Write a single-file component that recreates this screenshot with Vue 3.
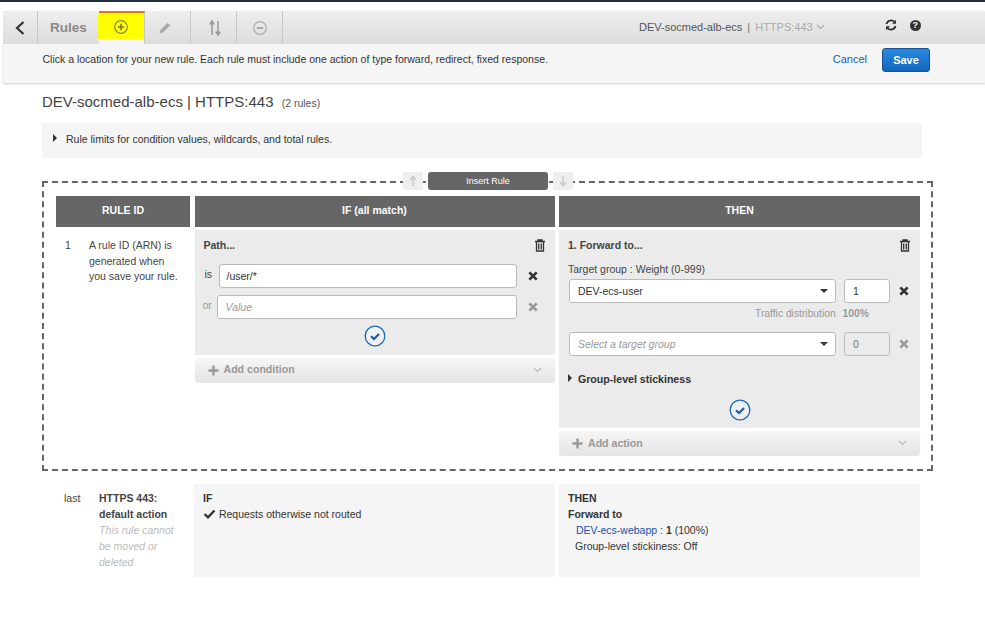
<template>
  <div class="page">
    <div class="topline"></div>

    <div class="toolbar">
      <div class="tab back">
        <svg width="12" height="16" viewBox="0 0 12 16"><path d="M9.500 2 3 8l6.500 6" fill="none" stroke="#333" stroke-width="2.200" /></svg>
      </div>
      <div class="tab rules">Rules</div>
      <div class="tab active">
        <div class="marker">
          <svg width="16" height="16" viewBox="0 0 16 16"><circle cx="8" cy="8" r="6.300" fill="none" stroke="#8a8a4a" stroke-width="1.200" /><path d="M8 4.800v6.400M4.800 8h6.400" stroke="#77773a" stroke-width="1.600" /></svg>
        </div>
      </div>
      <div class="tab icon-edit">
        <svg width="14" height="14" viewBox="0 0 14 14"><path d="M1.500 12.500 2.400 9 9.600 1.800l2.600 2.600L5 11.600z" fill="#aaa" /></svg>
      </div>
      <div class="tab">
        <svg width="12" height="18" viewBox="0 0 12 18"><path d="M3 16V3M.8 5.500 3 2l2.200 3.500M9 2v13M6.800 12.500 9 16l2.200-3.500" fill="none" stroke="#999" stroke-width="1.500" /></svg>
      </div>
      <div class="tab icon-remove">
        <svg width="16" height="16" viewBox="0 0 16 16"><circle cx="8" cy="8" r="6.300" fill="none" stroke="#aaa" stroke-width="1.200" /><path d="M4.800 8h6.400" stroke="#999" stroke-width="1.600" /></svg>
      </div>
      <div class="tab filler">
        <span class="lb-name">DEV-socmed-alb-ecs</span>
        <span class="lb-sep">|</span>
        <span class="lb-port">HTTPS:443</span>
        <svg class="lb-caret" width="9" height="6" viewBox="0 0 9 6"><path d="M1 1l3.500 3.500L8 1" fill="none" stroke="#aaa" stroke-width="1.200" /></svg>
        <svg class="refresh" width="12" height="12" viewBox="0 0 12 12"><path d="M1.500 5A4.600 4.600 0 0 1 9.500 3M10.500 7A4.600 4.600 0 0 1 2.500 9" fill="none" stroke="#333" stroke-width="1.800" /><path d="M11 .8v4H7zM1 11.200v-4h4z" fill="#333" /></svg>
        <span class="help">?</span>
      </div>
    </div>

    <div class="infobar">
      <span>Click a location for your new rule. Each rule must include one action of type forward, redirect, fixed response.</span>
      <a class="cancel">Cancel</a>
      <button class="save">Save</button>
    </div>

    <div class="content">
      <h1 class="title">DEV-socmed-alb-ecs | HTTPS:443 <small>(2 rules)</small></h1>
      <div class="limits"><i class="tri"></i>Rule limits for condition values, wildcards, and total rules.</div>

      <div class="editbox">
        <div class="insert">
          <span class="arrow-btn"><svg width="8" height="12" viewBox="0 0 8 12"><path d="M4 11V2M1 5l3-3.500L7 5" fill="none" stroke="#ccc" stroke-width="1.600" /></svg></span>
          <span class="insert-btn">Insert Rule</span>
          <span class="arrow-btn"><svg width="8" height="12" viewBox="0 0 8 12"><path d="M4 1v9M1 7l3 3.500L7 7" fill="none" stroke="#ccc" stroke-width="1.600" /></svg></span>
        </div>

        <div class="grid">
          <div class="head">RULE ID</div>
          <div class="head">IF (all match)</div>
          <div class="head">THEN</div>

          <div class="id-col">
            <span class="num">1</span>
            <span class="id-text">A rule ID (ARN) is generated when you save your rule.</span>
          </div>

          <div>
            <div class="panel if-panel">
              <div class="panel-title">
                <span>Path...</span>
                <svg width="12" height="13" viewBox="0 0 12 13"><path d="M1 2.500h10M4 2.500V1h4v1.500M2.500 3v9h7V3M4.700 4.500v6M7.300 4.500v6" fill="none" stroke="#333" stroke-width="1.300" /></svg>
              </div>
              <div class="cond-row">
                <span class="cond-label">is</span>
                <div class="field cond-is">/user/*</div>
                <svg class="x" width="10" height="10" viewBox="0 0 9 9"><path d="M1.200 1.200l6.600 6.600M7.800 1.200 1.200 7.800" stroke="#333" stroke-width="2.400" /></svg>
              </div>
              <div class="cond-row second">
                <span class="cond-label muted">or</span>
                <div class="field cond-or placeholder">Value</div>
                <svg class="x" width="10" height="10" viewBox="0 0 9 9"><path d="M1.200 1.200l6.600 6.600M7.800 1.200 1.200 7.800" stroke="#999" stroke-width="2.400" /></svg>
              </div>
              <div class="confirm if-confirm">
                <svg width="22" height="22" viewBox="0 0 22 22"><circle cx="11" cy="11" r="9.800" fill="#f0f0f0" stroke="#1a6bb5" stroke-width="1.300" /><path d="M7 11.200l3 2.800 5-5" fill="none" stroke="#1a5fa5" stroke-width="2.200" /></svg>
              </div>
            </div>
            <div class="adder">
              <svg width="11" height="11" viewBox="0 0 11 11"><path d="M5.500 .5v10M.5 5.500h10" stroke="#999" stroke-width="2.400" /></svg>
              <span class="raised">Add condition</span>
              <svg class="chev" width="9" height="6" viewBox="0 0 9 6"><path d="M1 1l3.500 3.500L8 1" fill="none" stroke="#bbb" stroke-width="1.100" /></svg>
            </div>
          </div>

          <div>
            <div class="panel then-panel">
              <div class="panel-title">
                <span>1. Forward to...</span>
                <svg width="12" height="13" viewBox="0 0 12 13"><path d="M1 2.500h10M4 2.500V1h4v1.500M2.500 3v9h7V3M4.700 4.500v6M7.300 4.500v6" fill="none" stroke="#333" stroke-width="1.300" /></svg>
              </div>
              <div class="tg-label">Target group : Weight (0-999)</div>
              <div class="tg-row">
                <div class="field select">DEV-ecs-user<i class="select-caret"></i></div>
                <div class="field weight">1</div>
                <svg class="x" width="10" height="10" viewBox="0 0 9 9"><path d="M1.200 1.200l6.600 6.600M7.800 1.200 1.200 7.800" stroke="#333" stroke-width="2.400" /></svg>
              </div>
              <div class="traffic">Traffic distribution <b>100%</b></div>
              <div class="tg-row tg-second">
                <div class="field select placeholder">Select a target group<i class="select-caret"></i></div>
                <div class="field weight disabled">0</div>
                <svg class="x" width="10" height="10" viewBox="0 0 9 9"><path d="M1.200 1.200l6.600 6.600M7.800 1.200 1.200 7.800" stroke="#999" stroke-width="2.400" /></svg>
              </div>
              <div class="sticky"><i class="tri"></i>Group-level stickiness</div>
              <div class="confirm then-confirm">
                <svg width="22" height="22" viewBox="0 0 22 22"><circle cx="11" cy="11" r="9.800" fill="#f0f0f0" stroke="#1a6bb5" stroke-width="1.300" /><path d="M7 11.200l3 2.800 5-5" fill="none" stroke="#1a5fa5" stroke-width="2.200" /></svg>
              </div>
            </div>
            <div class="adder">
              <svg width="11" height="11" viewBox="0 0 11 11"><path d="M5.500 .5v10M.5 5.500h10" stroke="#999" stroke-width="2.400" /></svg>
              <span>Add action</span>
              <svg class="chev" width="9" height="6" viewBox="0 0 9 6"><path d="M1 1l3.500 3.500L8 1" fill="none" stroke="#bbb" stroke-width="1.100" /></svg>
            </div>
          </div>
        </div>
      </div>

      <div class="last-row">
        <div class="last-id">
          <span class="last-num">last</span>
          <div class="last-text">
            <div class="last-name">HTTPS 443: default action</div>
            <div class="last-note">This rule cannot be moved or deleted</div>
          </div>
        </div>
        <div class="last-box">
          <div class="strong">IF</div>
          <div class="routed">
            <svg width="13" height="10" viewBox="0 0 13 10"><path d="M1.500 5l3.500 3.300L11.500 1.500" fill="none" stroke="#333" stroke-width="2.400" /></svg>
            Requests otherwise not routed
          </div>
        </div>
        <div class="last-box">
          <div class="strong">THEN</div>
          <div class="forward">Forward to</div>
          <div class="target"><a>DEV-ecs-webapp</a> : <b>1</b> (100%)</div>
          <div class="stick-off">Group-level stickiness: Off</div>
        </div>
      </div>
    </div>
  </div>
</template>

<script setup>
</script>

<style>
body {
  background: #fff;
}
</style>

<style scoped>
.page {
  width: 985px;
  height: 622px;
  overflow: hidden;
  font-family: "Liberation Sans", Arial, sans-serif;
  font-size: 12px;
  color: #333;
}

.topline {
  height: 2px;
  margin-bottom: 9px;
  background: #232f3e;
}

.toolbar {
  display: flex;
  height: 33px;
  margin-left: 3px;
  gap: 3px;
  background: linear-gradient(#eee, #ddd);
}

.tab {
  width: 43px;
  display: flex;
  align-items: center;
  justify-content: center;
  border-right: 1px solid #c8c8c8;
  box-sizing: border-box;
}

.tab.back {
  width: 35px;
  padding-right: 1px;
}

.tab.rules {
  width: 58px;
  margin-right: -3px;
  font-size: 13.500px;
  font-weight: bold;
  color: #8a8a8a;
  justify-content: flex-start;
  padding-left: 9px;
  border-right: 0;
}

.tab.active {
  width: 46px;
  display: block;
  background: #f5f5f5;
  border-top: 2px solid #e47911;
}

.marker {
  height: 26px;
  margin-left: -1px;
  padding-top: 1px;
  box-sizing: border-box;
  display: flex;
  align-items: center;
  justify-content: center;
  background: #ffff00;
}

.icon-edit {
  padding-right: 8px;
}

.icon-remove {
  padding-right: 3px;
}

.tab.filler {
  flex: 1;
  justify-content: flex-start;
  padding-left: 353px;
  padding-bottom: 2px;
  font-size: 11px;
  border-right: 0;
}

.lb-name {
  color: #555;
}

.lb-sep {
  margin: 0 5px;
  color: #777;
}

.lb-port {
  color: #aaa;
}

.lb-caret {
  margin-left: 3px;
}

.refresh {
  margin: 0 0 3px 60px;
}

.help {
  margin: 0 0 3px 13px;
  width: 11px;
  height: 11px;
  border-radius: 50%;
  background: #333;
  color: #fff;
  font-size: 9px;
  font-weight: bold;
  line-height: 11px;
  text-align: center;
}

.infobar {
  height: 39px;
  margin-left: 3px;
  display: flex;
  align-items: flex-start;
  box-sizing: border-box;
  padding: 8px 55px 0 39.500px;
  background: #f5f5f5;
  box-shadow: 0 1px 2px rgba(0, 0, 0, 0.2);
  font-size: 10.500px;
  line-height: 14px;
  color: #333;
}

.cancel {
  margin-left: auto;
  color: #1a5fb4;
  font-size: 11px;
}

.save {
  margin: -4px 0 0 15px;
  width: 48px;
  height: 24px;
  padding: 0;
  border: 1px solid #15508f;
  border-radius: 3px;
  background: linear-gradient(#2a8ae0, #1166bb);
  color: #fff;
  font-family: inherit;
  font-size: 11px;
  font-weight: bold;
}

.content {
  padding-left: 42px;
}

.title {
  margin: 9px 0 0;
  height: 19px;
  font-size: 15px;
  line-height: 19px;
  font-weight: normal;
  color: #444;
}

.title small {
  margin-left: 4px;
  font-size: 10.500px;
  color: #555;
}

.limits {
  width: 880px;
  height: 35px;
  margin-top: 12px;
  padding-left: 11px;
  box-sizing: border-box;
  background: #f5f5f5;
  line-height: 32px;
  font-size: 10.500px;
  color: #333;
}

.tri {
  display: inline-block;
  width: 0;
  height: 0;
  margin-right: 9px;
  vertical-align: 1px;
  border-left: 4px solid #333;
  border-top: 4px solid transparent;
  border-bottom: 4px solid transparent;
}

.editbox {
  position: relative;
  width: 891px;
  height: 290px;
  margin-top: 23px;
  box-sizing: border-box;
  border: 2px dashed #666;
  padding: 13px 0 0 12px;
}

.insert {
  position: absolute;
  top: -11px;
  left: 359px;
  display: flex;
  gap: 5px;
}

.arrow-btn {
  width: 20px;
  height: 18px;
  display: flex;
  align-items: center;
  justify-content: center;
  border-radius: 2px;
  background: #eee;
}

.insert-btn {
  width: 120px;
  height: 18px;
  border-radius: 3px;
  background: #666;
  color: #fff;
  font-size: 9px;
  line-height: 18px;
  text-align: center;
}

.grid {
  display: grid;
  grid-template-columns: 134px 360px 361px;
  grid-template-rows: 31px auto;
  column-gap: 4.500px;
  row-gap: 3px;
}

.head {
  background: #666;
  color: #fff;
  font-size: 10.500px;
  font-weight: bold;
  line-height: 29px;
  text-align: center;
}

.id-col {
  display: flex;
  padding-top: 8px;
  line-height: 15.500px;
  font-size: 10.500px;
  color: #444;
}

.num {
  width: 33px;
  padding-left: 9px;
  box-sizing: border-box;
  flex-shrink: 0;
}

.id-text {
  width: 95px;
}

.panel {
  background: #ebebeb;
  box-sizing: border-box;
}

.if-panel {
  height: 125px;
}

.then-panel {
  height: 198px;
}

.panel-title {
  display: flex;
  justify-content: space-between;
  align-items: center;
  padding: 8px 9px 0 9px;
  height: 14px;
  font-size: 10.500px;
  font-weight: bold;
  color: #444;
}

.field {
  height: 24px;
  box-sizing: border-box;
  background: #fff;
  border: 1px solid #bbb;
  border-radius: 3px;
  line-height: 22px;
  font-size: 10.500px;
  color: #333;
}

.placeholder {
  color: #999;
  font-style: italic;
}

.cond-row {
  display: flex;
  align-items: center;
  margin-top: 12px;
  padding-left: 10px;
}

.cond-row.second {
  margin-top: 7px;
  padding-left: 8px;
}

.cond-label {
  width: 14px;
  font-size: 10.500px;
  margin-top: -5px;
  color: #444;
}

.cond-label.muted {
  color: #999;
}

.cond-is {
  width: 298px;
  padding-left: 7px;
}

.cond-or {
  width: 300px;
  padding-left: 8px;
}

.cond-row .x {
  margin-left: 11px;
}

.confirm {
  display: flex;
  justify-content: center;
}

.if-confirm {
  margin-top: 6px;
}

.then-confirm {
  margin-top: 13px;
}

.adder {
  display: flex;
  align-items: center;
  height: 24px;
  margin-top: 3px;
  padding: 0 13px;
  border-radius: 3px;
  background: linear-gradient(#f6f6f6, #e5e5e5);
  box-shadow: 0 1px 1px rgba(0, 0, 0, 0.1);
  font-size: 10.600px;
  font-weight: bold;
  color: #999;
  gap: 5px;
}

.raised {
  margin-top: -2px;
}

.chev {
  margin-left: auto;
}

.tg-label {
  margin: 10px 0 0 9px;
  height: 14px;
  font-size: 10.500px;
  line-height: 14px;
  color: #444;
}

.tg-row {
  display: flex;
  align-items: center;
  margin: 3px 0 0 10px;
}

.tg-second {
  margin-top: 11px;
}

.select {
  position: relative;
  width: 267px;
  padding-left: 8px;
}

.select-caret {
  position: absolute;
  right: 7px;
  top: 9px;
  width: 0;
  height: 0;
  border-top: 4px solid #333;
  border-left: 4px solid transparent;
  border-right: 4px solid transparent;
}

.weight {
  width: 46px;
  margin-left: 8px;
  padding-left: 8px;
}

.weight.disabled {
  background: #ebebeb;
  color: #777;
}

.tg-row .x {
  margin-left: 9px;
}

.traffic {
  margin: 4px 0 0 196px;
  height: 14px;
  font-size: 10.300px;
  line-height: 14px;
  color: #999;
}

.traffic b {
  margin-left: 4px;
}

.sticky {
  margin: 16px 0 0 9px;
  height: 14px;
  font-size: 10.600px;
  font-weight: bold;
  line-height: 14px;
  color: #333;
}

.sticky .tri {
  margin-right: 6px;
}

.last-row {
  display: flex;
  margin-top: 13px;
}

.last-id {
  display: flex;
  width: 152px;
  font-size: 10.500px;
  line-height: 16px;
  padding-top: 6px;
  box-sizing: border-box;
}

.last-num {
  width: 35px;
  padding-left: 22px;
  box-sizing: content-box;
  color: #444;
}

.last-text {
  width: 80px;
}

.last-name {
  font-weight: bold;
  color: #444;
}

.last-note {
  color: #bbb;
  font-style: italic;
}

.last-box {
  width: 361px;
  height: 93px;
  margin-right: 4px;
  padding: 6px 9px;
  box-sizing: border-box;
  background: #f5f5f5;
  font-size: 10.500px;
  line-height: 16px;
  color: #333;
}

.strong {
  font-weight: bold;
}

.routed svg {
  vertical-align: -1px;
}

.forward {
  font-weight: bold;
}

.target {
  padding-left: 8px;
}

.target a {
  color: #1a4fb0;
}

.stick-off {
  padding-left: 7px;
}
</style>
